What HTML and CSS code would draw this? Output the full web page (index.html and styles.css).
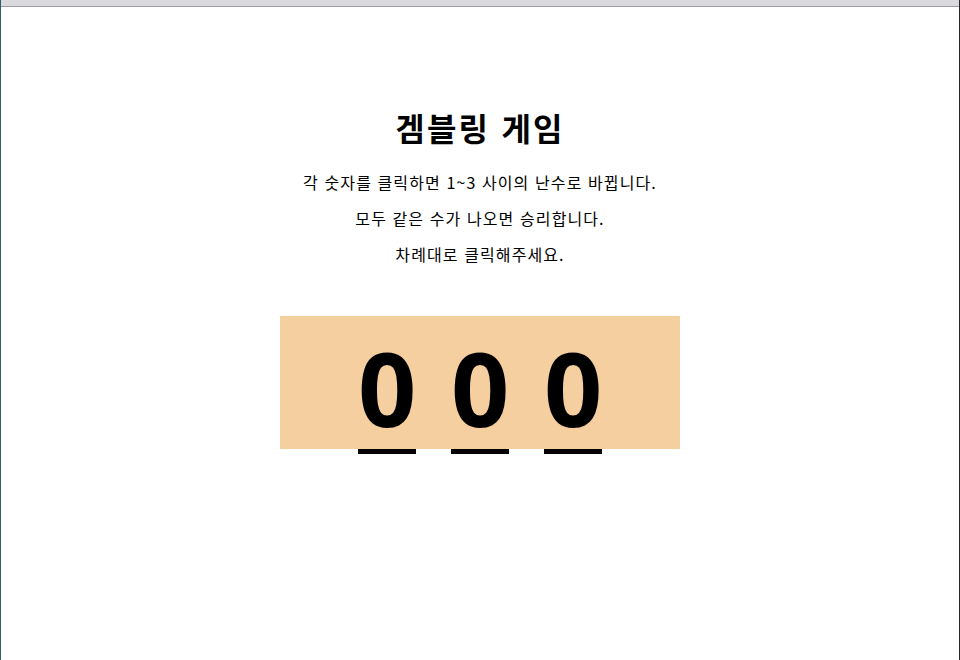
FILE: index.html
```html
<!DOCTYPE html>
<html lang="ko">

<head>
    <meta charset="UTF-8">
    <meta name="viewport" content="width=device-width, initial-scale=1.0">
    <title>겜블링 게임</title>
    <link rel="stylesheet" href="styles.css">
</head>

<body>
    <div class="window">
        <div class="titlebar"></div>
        <div class="container">
            <h1>겜블링 게임</h1>
            <p>각 숫자를 클릭하면 1~3 사이의 난수로 바뀝니다.</p>
            <p>모두 같은 수가 나오면 승리합니다.</p>
            <p>차례대로 클릭해주세요.</p>
            <div class="board">
                <span class="num">0</span>
                <span class="num">0</span>
                <span class="num">0</span>
            </div>
        </div>
    </div>
</body>

</html>
```

FILE: styles.css
```css
body {
    margin: 0;
    font-family: "Noto Sans CJK KR", "Noto Sans", sans-serif;
    color: #000;
    background-color: #fff;
}

.window {
    height: 660px;
    box-sizing: border-box;
    border-left: 1px solid #2a5f6d;
    border-right: 1px solid #2b2530;
    overflow: hidden;
}

.titlebar {
    height: 6px;
    background-color: #d9d9de;
    border-bottom: 1px solid #9d9ca3;
}

.container {
    display: flex;
    flex-direction: column;
    align-items: center;
    padding-top: 100px;
}

h1 {
    font-size: 32px;
    line-height: 40px;
    font-weight: bold;
    letter-spacing: 2.2px;
    margin: 0 0 25px;
}

p {
    font-size: 16px;
    line-height: 20px;
    letter-spacing: 1.1px;
    margin: 0 0 16px;
}

.board {
    margin-top: 36px;
    width: 400px;
    height: 133px;
    background-color: #f6cfa0;
    display: flex;
    justify-content: center;
    align-items: flex-start;
    gap: 35px;
}

.num {
    width: 58px;
    height: 133px;
    line-height: 143px;
    font-family: "Open Sans", sans-serif;
    font-size: 102px;
    font-weight: bold;
    text-align: center;
    border-bottom: 5px solid #000;
    cursor: pointer;
}
```
